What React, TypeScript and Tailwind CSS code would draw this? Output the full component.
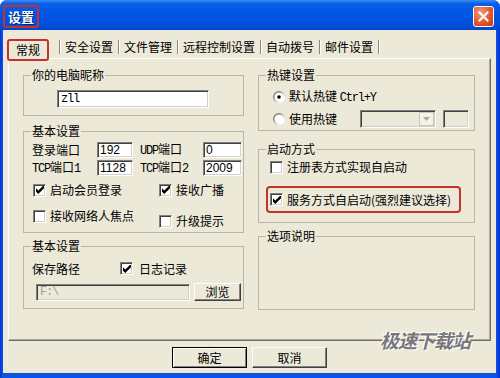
import type { ReactNode } from 'react'

type Kids = { className?: string; children?: ReactNode }

function Sunken({ className = '', children }: Kids) {
  return (
    <div
      className={`flex items-center border border-t-[#808080] border-l-[#808080] border-r-white border-b-white shadow-[inset_1px_1px_0_#404040,inset_-1px_-1px_0_#d4d0c8] ${className}`}
    >
      {children}
    </div>
  )
}

function Box({ on }: { on?: boolean }) {
  return (
    <Sunken className="h-[13px] w-[13px] shrink-0 justify-center bg-white">
      {on && (
        <svg width="8" height="8" viewBox="0 0 7 7" className="block">
          <polygon points="0,2 2,4 7,-1 7,2 2,7 0,5" fill="#000" />
        </svg>
      )}
    </Sunken>
  )
}

function Radio({ on }: { on?: boolean }) {
  return (
    <svg width="12" height="12" viewBox="0 0 12 12" className="block shrink-0">
      <defs>
        <linearGradient id="rg" x1="0" y1="0" x2="1" y2="1">
          <stop offset="0.3" stopColor="#808080" />
          <stop offset="0.75" stopColor="#ffffff" />
        </linearGradient>
      </defs>
      <circle cx="6" cy="6" r="6" fill="url(#rg)" />
      <circle cx="6" cy="6" r="4.6" fill="#fff" />
      {on && <circle cx="6" cy="6" r="1.8" fill="#000" />}
    </svg>
  )
}

function Check({ on, label, className = '' }: { on?: boolean; label: ReactNode; className?: string }) {
  return (
    <div className={`flex items-center gap-[4px] leading-[14px] ${className}`}>
      <Box on={on} />
      <span>{label}</span>
    </div>
  )
}

function Group({ title, className = '', children }: Kids & { title: string }) {
  return (
    <fieldset className={`border border-[#b9b6a6] ${className}`}>
      <legend className="ml-[7px] px-[1px] leading-[16px]">{title}</legend>
      {children}
    </fieldset>
  )
}

function Btn({ children, className = '', def }: Kids & { def?: boolean }) {
  return (
    <div
      className={`flex items-center justify-center bg-[#ece9d8] ${
        def
          ? 'border border-black shadow-[inset_1px_1px_0_#fff,inset_-1px_-1px_0_#808080]'
          : 'border border-t-white border-l-white border-r-[#404040] border-b-[#404040] shadow-[inset_-1px_-1px_0_#808080]'
      } ${className}`}
    >
      {children}
    </div>
  )
}

function Mono({ children }: Kids) {
  return <span className="font-['Liberation_Mono',monospace] text-[12px] tracking-[-1.2px]">{children}</span>
}

function Num({ children }: Kids) {
  return <span className="pl-[2px] font-['Liberation_Sans',sans-serif] text-[12px]">{children}</span>
}

const otherTabs = ['安全设置', '文件管理', '远程控制设置', '自动拨号', '邮件设置']

export default function App() {
  return (
    <div className="h-[378px] w-[500px] bg-white font-['Noto_Sans_CJK_SC','Noto_Sans',sans-serif] text-[12px] text-black">
      <div className="flex h-full flex-col rounded-t-[7px] bg-[linear-gradient(to_right,#0831d9_0px,#0a55e4_3px,#0a55e4_496px,#0831d9_500px)]">
        {/* title bar */}
        <div className="flex h-[30px] shrink-0 items-center justify-between rounded-t-[7px] bg-[linear-gradient(to_bottom,#3d8df5_0%,#0a5fe8_12%,#0055e5_45%,#0050dc_80%,#0046cc_100%)] pl-[3px] pr-[6px] pt-[3px]">
          <div className="flex h-[23px] w-[36px] items-center justify-center rounded-[3px] border-2 border-[#c8302c]">
            <span className="text-[13px] font-bold leading-none text-white [text-shadow:1px_1px_0_#0a1e6e]">设置</span>
          </div>
          <div className="flex h-[21px] w-[21px] items-center justify-center rounded-[3px] border border-white bg-[radial-gradient(circle_at_35%_30%,#f39a7c_0%,#e2582c_55%,#c23a12_100%)]">
            <svg width="11" height="11" viewBox="0 0 11 11">
              <path d="M1.5 1.5 L9.5 9.5 M9.5 1.5 L1.5 9.5" stroke="#fff" strokeWidth="2" strokeLinecap="square" />
            </svg>
          </div>
        </div>

        {/* client area */}
        <div className="relative mb-[5px] ml-[3px] mr-[4px] flex flex-1 flex-col bg-[#ece9d8]">
          {/* tabs */}
          <div className="flex h-[28px] shrink-0 items-center pl-[4px] pt-[5px]">
            <div className="relative z-10 -mb-[6px] flex h-[22px] w-[42px] items-center justify-center rounded-[3px] border-2 border-[#c8302c] bg-[#ece9d8]">
              常规
            </div>
            <div className="ml-[10px] flex items-center">
              {otherTabs.map((t) => (
                <div key={t} className="flex items-center">
                  <span className="h-[14px] w-[2px] border-l border-l-[#8a8878] border-r border-r-white" />
                  <span className="pl-[4px] pr-[5px] leading-[14px]">{t}</span>
                </div>
              ))}
              <span className="h-[14px] w-[2px] border-l border-l-[#8a8878] border-r border-r-white" />
            </div>
          </div>

          {/* tab panel */}
          <div className="mx-[5px] flex h-[283px] shrink-0 gap-[14px] border border-t-white border-l-white border-r-[#716f64] border-b-[#716f64] pl-[14px] pt-[8px] shadow-[inset_-1px_-1px_0_#aca899]">
            <div className="flex w-[221px] flex-col">
              <Group title="你的电脑昵称" className="h-[49px]">
                <Sunken className="ml-[33px] mt-[7px] h-[18px] w-[152px] bg-white pl-[3px]">
                  <Mono>zll</Mono>
                </Sunken>
              </Group>

              <Group title="基本设置" className="mt-[7px] h-[110px]">
                <div className="mt-[3px] flex flex-col gap-[2px] pl-[8px]">
                  <div className="flex h-[16px] items-center">
                    <span className="w-[65px] leading-[14px]">登录端口</span>
                    <Sunken className="h-[16px] w-[36px] bg-white"><Num>192</Num></Sunken>
                    <span className="ml-[7px] w-[63px] leading-[14px]"><Mono>UDP</Mono>端口</span>
                    <Sunken className="h-[16px] w-[39px] bg-white"><Num>0</Num></Sunken>
                  </div>
                  <div className="flex h-[16px] items-center">
                    <span className="w-[65px] leading-[14px]"><Mono>TCP</Mono>端口<Mono>1</Mono></span>
                    <Sunken className="h-[16px] w-[36px] bg-white"><Num>1128</Num></Sunken>
                    <span className="ml-[7px] w-[63px] leading-[14px]"><Mono>TCP</Mono>端口<Mono>2</Mono></span>
                    <Sunken className="h-[16px] w-[39px] bg-white"><Num>2009</Num></Sunken>
                  </div>
                </div>
                <div className="mt-[7px] flex pl-[9px]">
                  <div className="flex w-[126px] flex-col gap-[12px]">
                    <Check on label="启动会员登录" />
                    <Check label="接收网络人焦点" />
                  </div>
                  <div className="flex flex-col gap-[17px]">
                    <Check on label="接收广播" />
                    <Check label="升级提示" />
                  </div>
                </div>
              </Group>

              <Group title="基本设置" className="mt-[5px] h-[71px]">
                <div className="mt-[7px] flex h-[15px] items-center pl-[8px]">
                  <span className="w-[88px] leading-[14px]">保存路径</span>
                  <Check on label="日志记录" className="gap-[6px]" />
                </div>
                <div className="mt-[7px] flex items-center gap-[4px] pl-[12px]">
                  <Sunken className="h-[17px] w-[154px] bg-[#ece9d8] pl-[3px] text-[#a0a0a0]">
                    <Mono>F:\</Mono>
                  </Sunken>
                  <Btn className="h-[18px] w-[47px]">浏览</Btn>
                </div>
              </Group>
            </div>

            <div className="flex w-[217px] flex-col">
              <Group title="热键设置" className="h-[64px]">
                <div className="mt-[6px] flex items-center gap-[4px] pl-[14px] leading-[14px]">
                  <Radio on />
                  <span>默认热键 <Mono>Ctrl+Y</Mono></span>
                </div>
                <div className="mt-[5px] flex h-[18px] items-center pl-[14px] leading-[14px]">
                  <div className="flex w-[87px] items-center gap-[4px]">
                    <Radio />
                    <span>使用热键</span>
                  </div>
                  <Sunken className="h-[18px] w-[76px] justify-end bg-[#ece9d8] pr-[1px]">
                    <div className="flex h-[14px] w-[15px] items-center justify-center border border-[#c9c7ba] bg-[#f3f1e8]">
                      <svg width="7" height="4" viewBox="0 0 7 4">
                        <path d="M0 0 H7 L3.5 4 Z" fill="#aca899" />
                      </svg>
                    </div>
                  </Sunken>
                  <Sunken className="ml-[7px] h-[18px] w-[26px] bg-[#ece9d8]" />
                </div>
              </Group>

              <Group title="启动方式" className="mt-[10px] h-[82px]">
                <Check label="注册表方式实现自启动" className="mt-[3px] pl-[11px]" />
                <div className="ml-[7px] mt-[12px] flex h-[27px] w-[195px] items-center rounded-[4px] border-2 border-[#c8302c] pl-[2px]">
                  <Check on label="服务方式自启动(强烈建议选择)" />
                </div>
              </Group>

              <Group title="选项说明" className="mt-[5px] h-[82px]" />
            </div>
          </div>

          {/* buttons */}
          <div className="mt-[6px] flex justify-center gap-[5px]">
            <Btn def className="h-[21px] w-[75px]">确定</Btn>
            <Btn className="h-[21px] w-[75px]">取消</Btn>
          </div>

          <span className="absolute bottom-[24px] right-[26px] text-[19px] font-bold italic leading-none tracking-[-1px] text-[#777777] [text-shadow:1px_1px_0_#fff,-1px_-1px_0_#fff]">
            极速下载站
          </span>
        </div>
      </div>
    </div>
  )
}
